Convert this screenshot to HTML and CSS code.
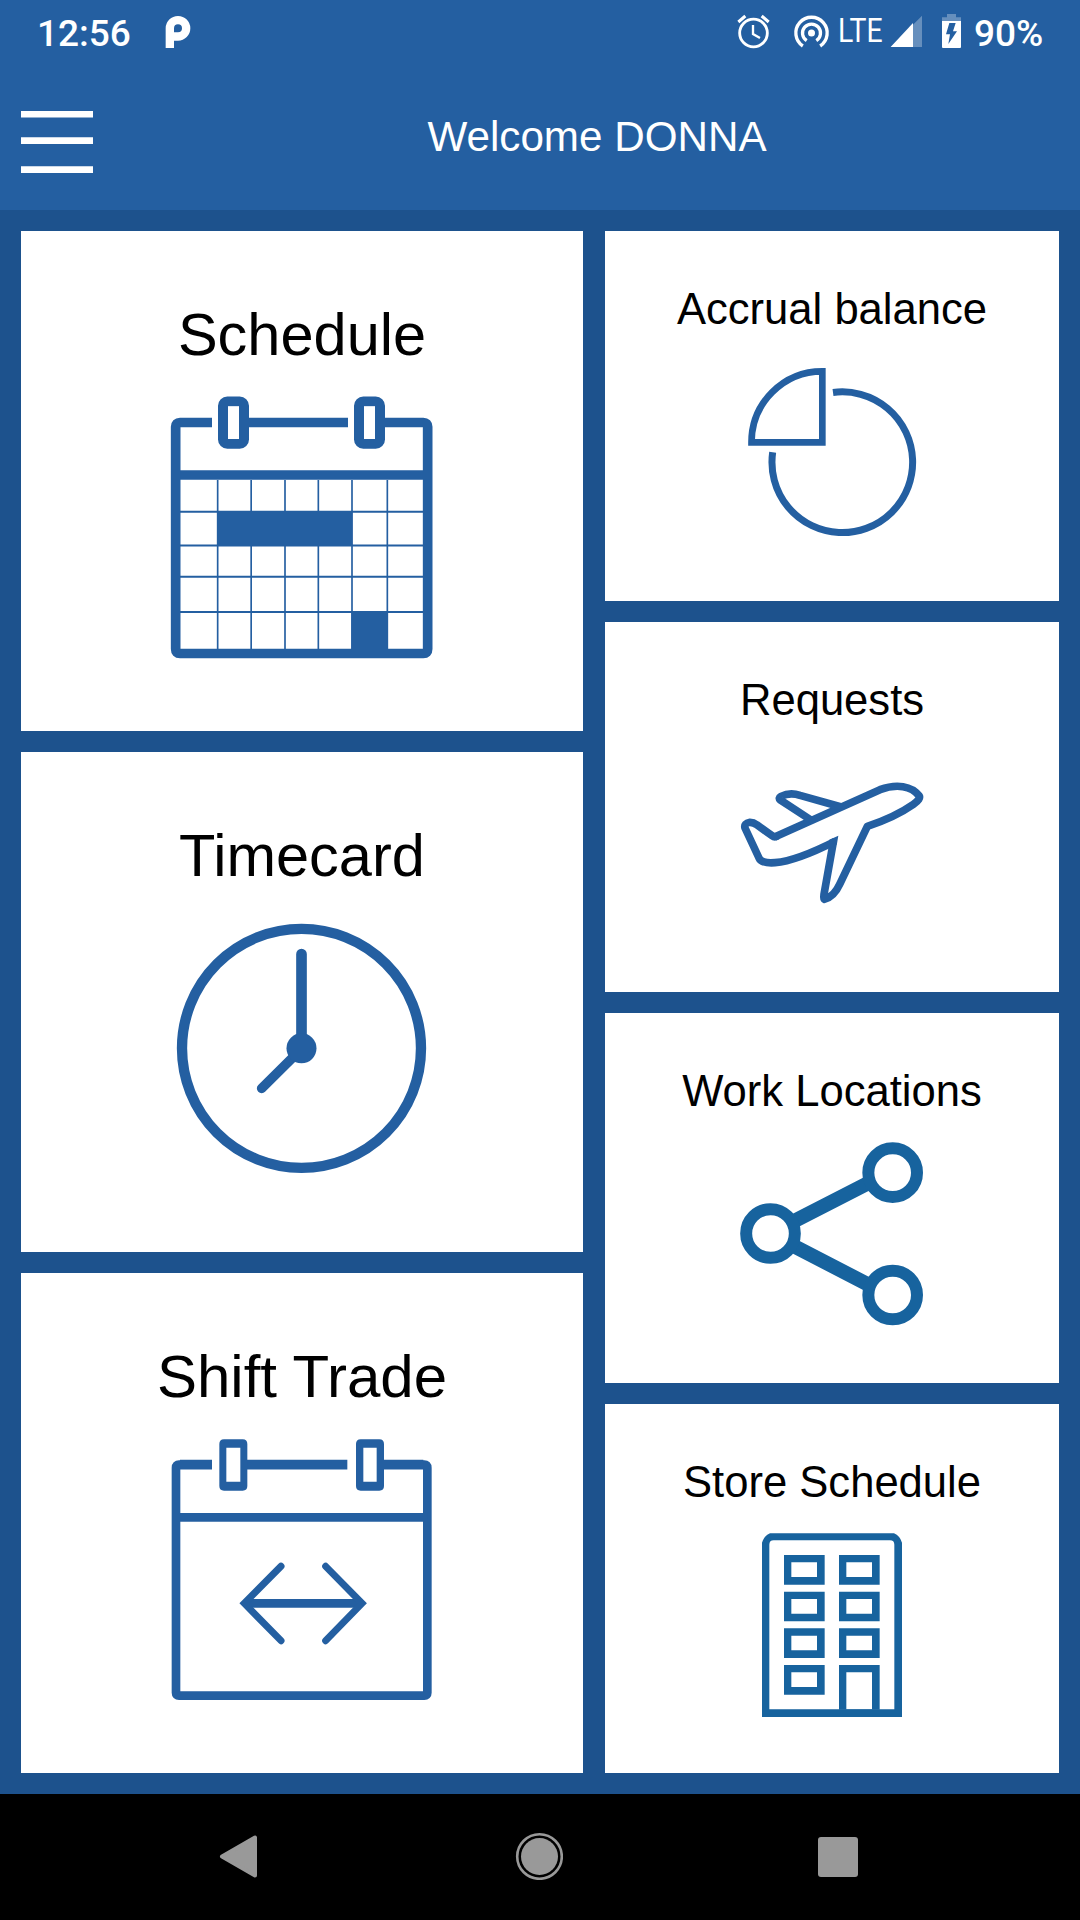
FILE: index.html
```html
<!DOCTYPE html>
<html lang="en">
<head>
<meta charset="utf-8">
<title>Welcome</title>
<link rel="stylesheet" href="styles.css">
</head>
<body>
<div class="screen">
  <div class="status">
    <span class="clock">12:56</span>
    <svg class="parking" viewBox="492 0 84 240"><path fill="#fff" fill-rule="evenodd" d="M497 144V85a37 37 0 1 1 37 37H522v22zM522 97h12a12 12 0 1 0-12-12z"/></svg>
    <svg class="alarm" viewBox="48 0 105 240" fill="none" stroke="#fff"><circle cx="100.500" cy="99" r="41.500" stroke-width="8.500"/><path stroke-width="7" d="M99 75v27l21 12"/><path stroke-width="9" d="M55 66l21-18M146 66l-21-18"/></svg>
    <svg class="hotspot" viewBox="219 0 111 240" fill="none" stroke="#fff" stroke-width="10"><circle cx="274.500" cy="99" r="10.500" fill="#fff" stroke="none"/><path d="M260 122a27 27 0 1 1 29 0M248.500 138a47 47 0 1 1 52 0"/></svg>
    <span class="network"><span class="network-text">LTE</span></span>
    <svg class="signal" viewBox="510 0 99 240" fill="#fff"><path fill-opacity=".3" d="M606 47v94h-94z"/><path d="M579 69v72h-67z"/></svg>
    <svg class="battery" viewBox="660 0 66 240"><path fill="#fff" fill-opacity=".3" d="M681 42h27v10h15v12h-57V52h15z"/><path fill="#fff" d="M666 63h57v78q0 3-3 3h-51q-3 0-3-3z"/><path fill="#245fa1" d="M688 69h19l-8 25h12l-26 38 5-29h-12z"/></svg>
    <span class="percent">90%</span>
  </div>
  <header class="appbar">
    <svg class="menu" viewBox="0 0 72 64" fill="#fff"><path d="M0 1h72v6.500H0zM0 27.200h72v6.800H0zM0 56.300h72v6.700H0z"/></svg>
    <h1 class="title">Welcome DONNA</h1>
  </header>
  <main class="board">
    <div class="column">
      <section class="tile">
        <h2 class="label">Schedule</h2>
        <svg class="icon" viewBox="6 270 900 900" fill="none" stroke="#245fa1">
          <path stroke-width="29" d="M186 397.500H90q-13 0-13 13V1077q0 13.500 13 13.500H820q13 0 13-13.500V410.500q0-13-13-13H705M297 397.500H594M77 555H833"/>
          <rect x="219" y="334.500" width="63" height="127" rx="13" stroke-width="30"/>
          <rect x="627" y="334.500" width="63" height="127" rx="13" stroke-width="30"/>
          <rect x="234" y="349" width="33" height="98" fill="#fff" stroke="none"/>
          <rect x="642" y="349" width="33" height="98" fill="#fff" stroke="none"/>
          <path stroke-width="5" d="M203 570V1077M303.500 570V1077M405 570V1077M505 570V1077M606 570V1077M712 570V1077"/>
          <path stroke-width="6" d="M90 665.500H820M90 766.500H820M90 860.500H820M90 966H820"/>
          <path fill="#245fa1" stroke="none" d="M201 663H607V768H201zM604 963H714V1080H604z"/>
        </svg>
      </section>
      <section class="tile">
        <h2 class="label">Timecard</h2>
        <svg class="icon" viewBox="6 273 900 900" fill="none" stroke="#245fa1" stroke-linecap="round">
          <circle cx="454.500" cy="715" r="358.500" stroke-width="31"/>
          <path stroke-width="32" d="M454.500 432V700"/>
          <path stroke-width="29" d="M335 835L440 731"/>
          <circle cx="454.500" cy="715" r="45" fill="#245fa1" stroke="none"/>
        </svg>
      </section>
      <section class="tile">
        <h2 class="label wide">Shift Trade</h2>
        <svg class="icon" viewBox="6 246 900 900" fill="none" stroke="#245fa1" stroke-width="26">
          <path d="M186 374H87q-9 0-9 9V1058q0 9 9 9H823q9 0 9-9V383q0-9-9-9H700" />
          <path stroke-width="29" d="M90 374H186M290 374H592M700 374H820"/>
          <path d="M78 532H832"/>
          <path fill="#245fa1" stroke="none" fill-rule="evenodd" d="M222 298H278q14 0 14 14V438q0 14-14 14H222q-14 0-14-14V312q0-14 14-14zM229 323V425H271V323zM632 298H688q14 0 14 14V438q0 14-14 14H632q-14 0-14-14V312q0-14 14-14zM640 323V425H680V323z"/>
          <path d="M290 790H630"/>
          <path stroke-width="21" stroke-linecap="round" d="M393 679L283 790L393 902M527 679L636 790L527 902"/>
        </svg>
      </section>
    </div>
    <div class="column narrow">
      <section class="tile">
        <h2 class="label">Accrual balance</h2>
        <svg class="icon" viewBox="216 213 600 600" fill="none" stroke="#245fa1">
          <path stroke-width="20" d="M487 274V487H274.500A212.500 213 0 0 1 487 274z"/>
          <path stroke-width="21" d="M519 337.500A211 211 0 1 1 338 517"/>
        </svg>
      </section>
      <section class="tile">
        <h2 class="label">Requests</h2>
        <svg class="icon" viewBox="96 215 600 600" fill="none" stroke="#245fa1" stroke-width="23" stroke-linejoin="round">
          <path d="M224 500L540 358C590 339 635 347 657 376Q664 385 640 402C600 430 550 452 502 468L420 640Q402 680 373 687Q370 686 372 672L400 515" />
          <path d="M405 513C330 551 270 573 225 577Q184 580 177 563L135 473Q131 459 150 456Q161 456 170 463L216 496Q224 502 232 497M331 448L241 389Q234 383 243 378Q270 365 300 375L424 410"/>
          <path fill="#245fa1" stroke="none" d="M388 508L415 496L411 520H388zM390 402L432 401L420 420z"/>
        </svg>
      </section>
      <section class="tile">
        <h2 class="label">Work Locations</h2>
        <svg class="icon" viewBox="186 219 600 600" fill="none" stroke="#17639e">
          <path stroke-width="43" d="M340 500L640 346M340 542L640 697"/>
          <g fill="#fff" stroke-width="36"><circle cx="301.500" cy="520.500" r="73"/><circle cx="668" cy="338" r="73"/><circle cx="668" cy="705" r="73"/></g>
        </svg>
      </section>
      <section class="tile">
        <h2 class="label">Store Schedule</h2>
        <svg class="icon" viewBox="186 222 600 600" fill="#17639e" fill-rule="evenodd">
          <path d="M276 801V278Q282 258 300 250H672Q690 258 696 278V801zM298 778H673V284Q673 271 660 271H311Q298 271 298 284z"/>
          <path d="M342 315h122v89H342zM364 337v44h77v-44zM507 315h122v89H507zM529 337v44h77v-44zM342 425h122v89H342zM364 447v44h77v-44zM507 425h122v89H507zM529 447v44h77v-44zM342 535h122v89H342zM364 557v44h77v-44zM507 535h122v89H507zM529 557v44h77v-44zM342 645h122v89H342zM364 667v44h77v-44zM507 645h122v134H507zM529 667v111h77v-111z"/>
        </svg>
      </section>
    </div>
  </main>
  <nav class="navbar">
    <svg class="key" viewBox="0 0 48 48"><path fill="#999" stroke="#999" stroke-width="4" stroke-linejoin="round" d="M7 24.500L40 5.500V43.500z"/></svg>
    <svg class="key" viewBox="0 0 48 48"><circle cx="24.500" cy="24.500" r="22.300" fill="none" stroke="#999" stroke-width="2.600"/><circle cx="24.500" cy="24.500" r="18.500" fill="#999"/></svg>
    <svg class="key" viewBox="0 0 48 48"><rect x="4" y="5" width="40" height="40" rx="3" fill="#999"/></svg>
  </nav>
</div>
</body>
</html>
```
FILE: styles.css
```css
* { box-sizing: border-box; }

body {
  margin: 0;
  font-family: "Liberation Sans", Arial, sans-serif;
  background: #1d528d;
}

svg { display: block; flex: none; }

.screen {
  width: 1080px;
  height: 1920px;
  display: flex;
  flex-direction: column;
  overflow: hidden;
}

.status {
  height: 80px;
  display: flex;
  background: #245fa1;
  color: #fff;
  font-family: Roboto, sans-serif;
  font-size: 37px;
  font-weight: 500;
  line-height: 67px;
  padding: 0 0 0 37px;
  white-space: nowrap;
}

.clock { width: 127px; }
.parking { width: 28px; height: 80px; }
.alarm { width: 35px; height: 80px; margin-left: 544px; }
.hotspot { width: 37px; height: 80px; margin-left: 22px; }
.network { width: 60px; font-size: 33px; font-weight: 400; line-height: 62px; padding-left: 8px; }
.network-text { display: inline-block; transform: scaleX(0.86); transform-origin: left; }
.signal { width: 33px; height: 80px; }
.battery { width: 22px; height: 80px; margin-left: 17px; }
.percent { margin-left: 12px; }

.appbar {
  height: 130px;
  display: flex;
  background: #245fa1;
  padding: 30px 0 0 21px;
}

.menu { width: 72px; height: 64px; }

.title {
  flex: 1;
  margin: 4px 0 0 21px;
  color: #fff;
  font-size: 42.2px;
  font-weight: 400;
  line-height: 46px;
  text-align: center;
}

.board {
  flex: 1;
  min-height: 0;
  display: grid;
  grid-template-columns: 562px 454px;
  column-gap: 22px;
  padding: 21px;
}

.column {
  display: grid;
  grid-template-rows: repeat(3, 1fr);
  row-gap: 21px;
}

.narrow { grid-template-rows: 370px 370px 370px 1fr; }

.tile {
  min-height: 0;
  display: flex;
  flex-direction: column;
  align-items: center;
  padding-top: 74px;
  background: #fff;
}

.label {
  margin: 0;
  color: #000;
  font-size: 59.5px;
  font-weight: 400;
  line-height: 60px;
}

.label.wide { font-size: 60px; }

.icon { width: 300px; height: 300px; margin-top: 15px; }

.narrow .tile { padding-top: 56px; }
.narrow .label { font-size: 43.6px; line-height: 44px; }
.narrow .icon { width: 200px; height: 200px; margin-top: 20px; }

.navbar {
  height: 126px;
  display: flex;
  justify-content: space-between;
  padding: 38px 218px 0 215px;
  background: #000;
}

.key { width: 48px; height: 48px; }
```
